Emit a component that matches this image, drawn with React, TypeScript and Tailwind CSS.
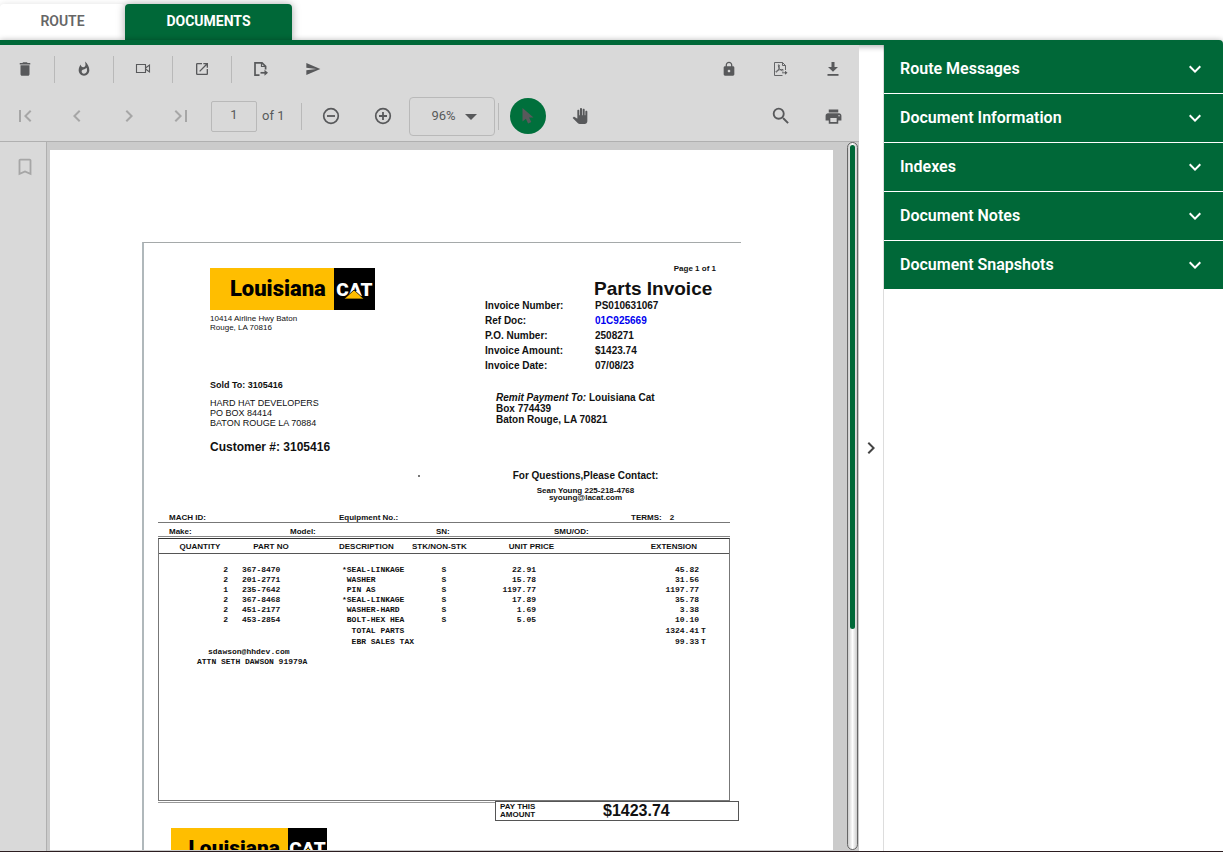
import { useState } from 'react';
import type { ReactNode } from 'react';
import {
  MdBookmarkBorder,
  MdChevronLeft,
  MdChevronRight,
  MdDelete,
  MdExpandMore,
  MdFirstPage,
  MdLastPage,
  MdLock,
  MdOpenInNew,
  MdPanTool,
  MdPrint,
  MdSearch,
  MdSend,
  MdWhatshot,
} from 'react-icons/md';

const panels = ['Route Messages', 'Document Information', 'Indexes', 'Document Notes', 'Document Snapshots'];

const invoiceInfo = [
  { label: 'Invoice Number:', value: 'PS010631067' },
  { label: 'Ref Doc:', value: '01C925669', link: true },
  { label: 'P.O. Number:', value: '2508271' },
  { label: 'Invoice Amount:', value: '$1423.74' },
  { label: 'Invoice Date:', value: '07/08/23' },
];

const lines = [
  { qty: '2', part: '367-8470', desc: '*SEAL-LINKAGE', stk: 'S', price: '22.91', ext: '45.82' },
  { qty: '2', part: '201-2771', desc: ' WASHER', stk: 'S', price: '15.78', ext: '31.56' },
  { qty: '1', part: '235-7642', desc: ' PIN AS', stk: 'S', price: '1197.77', ext: '1197.77' },
  { qty: '2', part: '367-8468', desc: '*SEAL-LINKAGE', stk: 'S', price: '17.89', ext: '35.78' },
  { qty: '2', part: '451-2177', desc: ' WASHER-HARD', stk: 'S', price: '1.69', ext: '3.38' },
  { qty: '2', part: '453-2854', desc: ' BOLT-HEX HEA', stk: 'S', price: '5.05', ext: '10.10' },
];

const totals = [
  { desc: '  TOTAL PARTS', ext: '1324.41' },
  { desc: '  EBR SALES TAX', ext: '99.33' },
];

function ToolButton({ label, disabled, children }: { label: string; disabled?: boolean; children: ReactNode }) {
  return (
    <button
      type="button"
      aria-label={label}
      disabled={disabled}
      className="flex h-9 w-[52px] shrink-0 items-center justify-center text-[#58595b] disabled:text-[#a6a6a6]"
    >
      {children}
    </button>
  );
}

function Divider() {
  return <span className="mx-[3px] h-[27px] w-px shrink-0 bg-[#b9b9b9]" />;
}

function VideoIcon() {
  return (
    <svg width="16" height="12" viewBox="0 0 16 12" fill="none" stroke="currentColor" strokeWidth="1.100">
      <path d="M1.500 1.500h9v8h-9z" />
      <path d="M10.500 5 14.500 2v7l-4-3" />
    </svg>
  );
}

function ExportIcon() {
  return (
    <svg width="16" height="18" viewBox="0 0 16 18" fill="none" stroke="currentColor" strokeWidth="1.700">
      <path d="M6.500 15.200H2V2.800h7l3.600 3.600v3.200" />
      <path d="M8.500 2.500v4h4" strokeWidth="1.200" />
      <path d="M7.500 12.800h6" />
      <path d="M11.500 9.800v6l3.500-3z" fill="currentColor" stroke="none" />
    </svg>
  );
}

function PdfExportIcon() {
  return (
    <svg width="16" height="18" viewBox="0 0 16 18" fill="none" stroke="currentColor" strokeWidth="0.900">
      <path d="M12.500 10V5.500l-3-3h-8v13h8" />
      <path d="M9.500 2.500v3h3" />
      <path d="M6 4.500c-1 0-.8 2 .2 3.800 1 1.900 3 2.900 4.300 2.600M6.300 5c.5 2-.8 5-2.600 7-.7.700-1.200-.2-.4-.9C5 10 7.500 9.200 10.300 9.500" />
      <path d="M9 12.800h4" />
      <path d="M12 10.800v4l2.500-2z" fill="currentColor" stroke="none" />
    </svg>
  );
}

function DownloadIcon() {
  return (
    <svg width="14" height="16" viewBox="0 0 14 16" fill="currentColor">
      <path d="M5.500 1h3v5H12l-5 4.700L2 6h3.500z" />
      <path d="M1.500 13h11v1.800h-11z" />
    </svg>
  );
}

function ZoomIcon({ plus }: { plus?: boolean }) {
  return (
    <svg width="18" height="18" viewBox="0 0 18 18" fill="none" stroke="currentColor" strokeWidth="1.700">
      <circle cx="9" cy="9" r="7.300" />
      <path d={plus ? 'M5 9h8M9 5v8' : 'M5 9h8'} strokeWidth="1.800" />
    </svg>
  );
}

function CursorIcon() {
  return (
    <svg width="14" height="18" viewBox="0 0 14 18" fill="currentColor">
      <path d="M1.500 1v13.500l3.400-2.700 2.200 4.700 3.200-1.500-2.200-4.500h4.400z" />
    </svg>
  );
}

function Logo({ small }: { small?: boolean }) {
  return (
    <div
      className={`flex font-['Roboto',sans-serif] font-black leading-none ${
        small ? 'h-10 w-[156px] text-[21px]' : 'h-[42px] w-[165px] text-[22px]'
      }`}
    >
      <div className="flex flex-1 items-center justify-end bg-[#ffbe00] pr-2 text-black">Louisiana</div>
      <div className="relative flex w-1/4 items-center justify-center bg-black text-[19px] text-white">
        CAT
        <svg viewBox="0 0 20 9" className="absolute bottom-[11px] left-1/2 h-[9px] w-5 -translate-x-1/2">
          <path d="M10 0 20 9H0z" fill="#ffbe00" stroke="#000" strokeWidth="0.800" />
        </svg>
      </div>
    </div>
  );
}

function Invoice() {
  return (
    <article className="ml-[92px] mt-[92px] w-[599px] border-l-2 border-t border-l-[#b0b8bb] border-t-[#a5a9aa] font-['Liberation_Sans',sans-serif] text-[#111]">
      <div className="flex">
        <div className="w-[341px] pl-[66px] pt-[25px]">
          <Logo />
          <p className="mt-1 text-[8px] leading-[9px]">10414 Airline Hwy Baton<br />Rouge, LA 70816</p>
          <p className="mt-12 text-[9px] font-bold leading-[10px]">Sold To: 3105416</p>
          <p className="mt-2 text-[9px] leading-[10px]">HARD HAT DEVELOPERS<br />PO BOX 84414<br />BATON ROUGE LA 70884</p>
          <p className="mt-[11px] text-[12px] font-bold leading-4">Customer #: 3105416</p>
          <div className="ml-[208px] mt-5 size-0.5 bg-[#777]" />
        </div>
        <div className="flex-1 pt-[21px] font-bold">
          <p className="pr-[25px] text-right text-[8px] leading-[10px]">Page 1 of 1</p>
          <h1 className="ml-[109px] mt-1.5 text-[19px] leading-[18px]">Parts Invoice</h1>
          <dl className="grid grid-cols-[110px_1fr] text-[10px] leading-[15px]">
            {invoiceInfo.map(({ label, value, link }) => (
              <div key={label} className="contents">
                <dt>{label}</dt>
                <dd>{link ? <a href="#ref" className="text-[#0000f0]">{value}</a> : value}</dd>
              </div>
            ))}
          </dl>
          <p className="ml-[11px] mt-[19px] text-[10px] leading-[11px]">
            <em>Remit Payment To:</em> Louisiana Cat<br />Box 774439<br />Baton Rouge, LA 70821
          </p>
          <div className="mt-[45px] w-[201px] text-center">
            <p className="text-[10px] leading-3">For Questions,Please Contact:</p>
            <p className="mt-[5px] text-[8px] leading-[7px]">Sean Young 225-218-4768<br />syoung@lacat.com</p>
          </div>
        </div>
      </div>

      <div className="ml-[14px] mr-[11px] mt-3 text-[8px] font-bold">
        <div className="grid grid-cols-[170px_292px_1fr] border-b border-[#777] pl-[11px] leading-[9px]">
          <span>MACH ID:</span>
          <span>Equipment No.:</span>
          <span className="flex gap-2">TERMS: <span>2</span></span>
        </div>
        <div className="grid grid-cols-[121px_146px_118px_1fr] border-b border-[#888] pl-[11px] pt-1 leading-[9px]">
          <span>Make:</span>
          <span>Model:</span>
          <span>SN:</span>
          <span>SMU/OD:</span>
        </div>

        <div className="mt-px h-[263px] border border-[#777] border-t-[#333]">
          <table className="w-full table-fixed whitespace-pre font-['Liberation_Mono',monospace] leading-[10px]">
            <colgroup>
              <col className="w-[82px]" />
              <col className="w-[60px]" />
              <col className="w-[111px]" />
              <col className="w-[54px]" />
              <col className="w-[131px]" />
              <col className="w-[102px]" />
              <col className="w-[30px]" />
            </colgroup>
            <thead className="font-['Liberation_Sans',sans-serif]">
              <tr className="h-[14px] border-b border-[#555]">
                <th className="pt-0.5">QUANTITY</th>
                <th className="pt-0.5">PART NO</th>
                <th className="pl-[38px] pt-0.5 text-left">DESCRIPTION</th>
                <th className="pt-0.5">STK/NON-STK</th>
                <th className="pt-0.5">UNIT PRICE</th>
                <th className="pr-0.5 pt-0.5 text-right">EXTENSION</th>
                <th />
              </tr>
            </thead>
            <tbody>
              <tr className="h-3"><td colSpan={7} /></tr>
              {lines.map((line) => (
                <tr key={line.part}>
                  <td className="pr-[13px] text-right">{line.qty}</td>
                  <td className="pl-px">{line.part}</td>
                  <td className="pl-[41px]">{line.desc}</td>
                  <td className="pl-2.5 text-center">{line.stk}</td>
                  <td className="pr-[61px] text-right">{line.price}</td>
                  <td className="text-right">{line.ext}</td>
                  <td />
                </tr>
              ))}
              {totals.map((total) => (
                <tr key={total.ext}>
                  <td colSpan={2} />
                  <td className="pl-[41px] pt-px">{total.desc}</td>
                  <td colSpan={2} />
                  <td className="pt-px text-right">{total.ext}</td>
                  <td className="pl-0.5 pt-px">T</td>
                </tr>
              ))}
            </tbody>
          </table>
          <div className="pl-[38px] font-['Liberation_Mono',monospace] leading-[10px]">
            <p className="pl-[11px]">sdawson@hhdev.com</p>
            <p>ATTN SETH DAWSON 91979A</p>
          </div>
        </div>
      </div>

      <div className="flex">
        <div className="ml-[14px] mt-px h-px w-[337px] bg-[#999]" />
        <div className="flex h-5 w-[244px] items-center border border-[#555] pl-1 font-bold">
          <p className="w-[103px] text-[8px] leading-[8px]">PAY THIS<br />AMOUNT</p>
          <p className="text-[16px] leading-4">$1423.74</p>
        </div>
      </div>
      <div className="ml-[27px] mt-[7px]">
        <Logo small />
      </div>
    </article>
  );
}

function Viewer() {
  const [page, setPage] = useState('1');
  const [zoom, setZoom] = useState('96%');

  return (
    <section className="flex min-w-0 flex-1 flex-col bg-[#d9d9d9] text-[#58595b]">
      <div className="-ml-px flex h-12 shrink-0 items-center">
        <ToolButton label="Delete"><MdDelete size={18} /></ToolButton>
        <Divider />
        <ToolButton label="Burn redactions"><MdWhatshot size={16} /></ToolButton>
        <Divider />
        <ToolButton label="Record"><VideoIcon /></ToolButton>
        <Divider />
        <ToolButton label="Open in new window"><MdOpenInNew size={16} /></ToolButton>
        <Divider />
        <ToolButton label="Export page"><ExportIcon /></ToolButton>
        <ToolButton label="Send"><MdSend size={16} /></ToolButton>
        <div className="ml-auto flex">
          <ToolButton label="Lock"><MdLock size={16} /></ToolButton>
          <ToolButton label="Export PDF"><PdfExportIcon /></ToolButton>
          <ToolButton label="Download"><DownloadIcon /></ToolButton>
        </div>
      </div>

      <div className="-ml-px flex h-[49px] shrink-0 items-center border-b border-[#b0b0b0] pb-0.5 text-[13px]">
        <ToolButton label="First page" disabled><MdFirstPage size={24} /></ToolButton>
        <ToolButton label="Previous page" disabled><MdChevronLeft size={24} /></ToolButton>
        <ToolButton label="Next page" disabled><MdChevronRight size={24} /></ToolButton>
        <ToolButton label="Last page" disabled><MdLastPage size={24} /></ToolButton>
        <input
          aria-label="Page number"
          value={page}
          onChange={(e) => setPage(e.target.value)}
          className="ml-1 h-[31px] w-[46px] rounded-xs border border-[#b9b9b9] pb-1 text-center"
        />
        <span className="ml-[5px] mr-3.5 whitespace-nowrap">of 1</span>
        <Divider />
        <ToolButton label="Zoom out"><ZoomIcon /></ToolButton>
        <ToolButton label="Zoom in"><ZoomIcon plus /></ToolButton>
        <div className="relative h-[39px] w-[86px] shrink-0">
          <select
            aria-label="Zoom level"
            value={zoom}
            onChange={(e) => setZoom(e.target.value)}
            className="size-full appearance-none rounded-sm border border-[#b9b9b9] pl-[21px]"
          >
            <option>96%</option>
            <option>100%</option>
          </select>
          <svg width="12" height="6" viewBox="0 0 12 6" className="pointer-events-none absolute right-[18px] top-[17px]">
            <path d="M0 0h12L6 6z" fill="currentColor" />
          </svg>
        </div>
        <Divider />
        <ToolButton label="Select tool">
          <span className="flex size-9 items-center justify-center rounded-full bg-[#00703c]"><CursorIcon /></span>
        </ToolButton>
        <ToolButton label="Pan tool"><MdPanTool size={16} /></ToolButton>
        <div className="ml-auto flex">
          <ToolButton label="Search"><MdSearch size={22} /></ToolButton>
          <ToolButton label="Print"><MdPrint size={19} /></ToolButton>
        </div>
      </div>

      <div className="flex min-h-0 flex-1">
        <div className="w-[47px] shrink-0 border-r border-[#b0b0b0] pt-3.5">
          <button type="button" aria-label="Bookmarks" className="ml-3.5 block text-[#a6a6a6]">
            <MdBookmarkBorder size={22} />
          </button>
        </div>
        <div className="flex min-w-0 flex-1 bg-[#cbcbcb] pl-[3px] pr-px">
          <div className="mb-px mt-2 min-w-0 flex-1 overflow-hidden bg-white">
            <Invoice />
          </div>
          <div className="mb-px ml-3.5 w-[11px] shrink-0 rounded-full border border-[#666] bg-linear-to-r from-[#ccc] via-white to-[#ccc] px-0.5 py-0.5">
            <div className="h-[69%] rounded-full bg-[#006838]" />
          </div>
        </div>
      </div>
    </section>
  );
}

export default function App() {
  return (
    <div className="flex h-screen flex-col overflow-hidden border-b border-[#2b1d20] bg-white font-['Roboto',sans-serif]">
      <nav className="flex h-10 shrink-0 pt-1 text-[14px]">
        <a href="#route" className="flex w-[125px] items-center justify-center rounded-t pb-0.5 font-semibold text-[#666] shadow-[0_0_6px_rgba(0,0,0,0.12)]">ROUTE</a>
        <a href="#documents" aria-current="page" className="z-10 flex w-[167px] items-center justify-center rounded-t bg-[#006838] pb-0.5 font-bold text-white shadow-[0_0_8px_rgba(0,0,0,0.35)]">DOCUMENTS</a>
      </nav>
      <div className="z-10 h-[5px] shrink-0 rounded-tr bg-[#006838] shadow-[0_1px_6px_rgba(0,0,0,0.4)]" />
      <main className="relative flex min-h-0 flex-1">
        <div className="z-10 flex min-w-0 flex-1">
          <Viewer />
        </div>
        <button type="button" aria-label="Collapse side panel" className="flex w-[25px] shrink-0 items-center justify-end border-r border-[#ddd] text-[#444]">
          <MdChevronRight size={24} />
        </button>
        <aside className="z-10 w-[339px] shrink-0">
          <ul className="divide-y divide-white bg-[#006838]">
            {panels.map((title) => (
              <li key={title}>
                <button type="button" aria-expanded="false" className="flex h-12 w-full items-center justify-between px-4 text-[16px] font-semibold text-white">
                  {title}
                  <MdExpandMore size={24} />
                </button>
              </li>
            ))}
          </ul>
        </aside>
      </main>
    </div>
  );
}
